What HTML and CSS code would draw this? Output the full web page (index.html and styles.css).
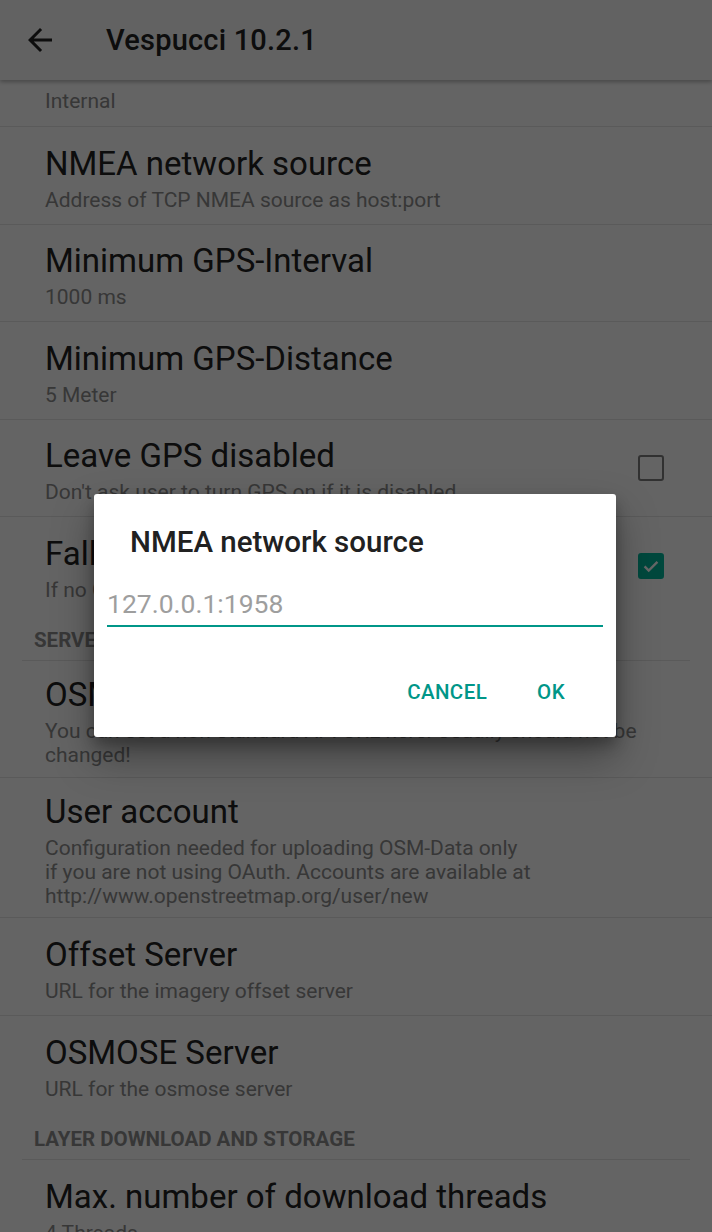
FILE: index.html
```html
<!DOCTYPE html>
<html lang="en">
<head>
<meta charset="utf-8">
<title>Vespucci 10.2.1</title>
<link rel="stylesheet" href="styles.css">
</head>
<body>
<div class="screen">
  <header class="toolbar">
    <button class="nav-btn" aria-label="Back">
      <svg viewBox="0 0 24 24" width="36" height="36"><path d="M20 11H7.83l5.59-5.59L12 4l-8 8 8 8 1.41-1.41L7.83 13H20v-2z" fill="#212121"/></svg>
    </button>
    <h1 class="toolbar-title">Vespucci 10.2.1</h1>
  </header>

  <main class="prefs">
    <div class="pref pref-partial">
      <div class="pref-text"><div class="pref-summary">Internal</div></div>
    </div>
    <div class="pref">
      <div class="pref-text">
        <div class="pref-title">NMEA network source</div>
        <div class="pref-summary">Address of TCP NMEA source as host:port</div>
      </div>
    </div>
    <div class="pref">
      <div class="pref-text">
        <div class="pref-title">Minimum GPS-Interval</div>
        <div class="pref-summary">1000 ms</div>
      </div>
    </div>
    <div class="pref">
      <div class="pref-text">
        <div class="pref-title">Minimum GPS-Distance</div>
        <div class="pref-summary">5 Meter</div>
      </div>
    </div>
    <div class="pref">
      <div class="pref-text">
        <div class="pref-title">Leave GPS disabled</div>
        <div class="pref-summary">Don't ask user to turn GPS on if it is disabled</div>
      </div>
      <span class="checkbox"></span>
    </div>
    <div class="pref last">
      <div class="pref-text">
        <div class="pref-title">Fallback to network location</div>
        <div class="pref-summary">If no GPS fix is available use network location</div>
      </div>
      <span class="checkbox checked">
        <svg viewBox="0 0 24 24" width="22" height="22"><path d="M5 12.5l4.5 4.5L19 7.5" fill="none" stroke="#ffffff" stroke-width="2.6"/></svg>
      </span>
    </div>

    <div class="category">Server settings</div>
    <div class="pref">
      <div class="pref-text">
        <div class="pref-title">OSM API URL</div>
        <div class="pref-summary">You can set a non-standard API URL here. Usually should not be<br>changed!</div>
      </div>
    </div>
    <div class="pref">
      <div class="pref-text">
        <div class="pref-title">User account</div>
        <div class="pref-summary">Configuration needed for uploading OSM-Data only<br>if you are not using OAuth. Accounts are available at<br>http://www.openstreetmap.org/user/new</div>
      </div>
    </div>
    <div class="pref">
      <div class="pref-text">
        <div class="pref-title">Offset Server</div>
        <div class="pref-summary">URL for the imagery offset server</div>
      </div>
    </div>
    <div class="pref last">
      <div class="pref-text">
        <div class="pref-title">OSMOSE Server</div>
        <div class="pref-summary">URL for the osmose server</div>
      </div>
    </div>

    <div class="category">Layer download and storage</div>
    <div class="pref">
      <div class="pref-text">
        <div class="pref-title">Max. number of download threads</div>
        <div class="pref-summary">4 Threads</div>
      </div>
    </div>
  </main>

  <div class="scrim"></div>

  <div class="dialog" role="dialog">
    <h2 class="dialog-title">NMEA network source</h2>
    <div class="dialog-field">
      <span class="dialog-hint">127.0.0.1:1958</span>
    </div>
    <div class="dialog-actions">
      <button class="dialog-btn">Cancel</button>
      <button class="dialog-btn">OK</button>
    </div>
  </div>
</div>
</body>
</html>
```

FILE: styles.css
```css
html, body {
  margin: 0;
  padding: 0;
}

body {
  width: 712px;
  height: 1232px;
  overflow: hidden;
  background: #fafafa;
  font-family: Roboto, "Noto Sans", sans-serif;
  color: #212121;
}

.screen {
  position: relative;
  width: 712px;
  height: 1232px;
  overflow: hidden;
  background: #fafafa;
}

/* ---------- toolbar ---------- */
.toolbar {
  position: relative;
  z-index: 2;
  height: 80px;
  display: flex;
  align-items: center;
  background: #f5f5f5;
  box-shadow: 0 2px 4px rgba(0, 0, 0, 0.28);
}

.nav-btn {
  border: 0;
  background: none;
  padding: 0;
  margin-left: 22px;
  width: 36px;
  height: 36px;
  display: flex;
}

.toolbar-title {
  margin: 0 0 0 48px;
  font-size: 29px;
  font-weight: 500;
  color: #212121;
  letter-spacing: 0.2px;
}

/* ---------- preference list ---------- */
.prefs {
  display: flex;
  flex-direction: column;
}

.pref {
  display: flex;
  align-items: center;
  min-height: 97.6px;
  box-sizing: border-box;
  padding: 15px 48px 9.5px 45px;
  border-bottom: 1px solid #e0e0e0;
}

.pref.last {
  border-bottom: 0;
}

.pref.pref-partial {
  min-height: 47px;
  padding: 0 48px 13px 45px;
  align-items: flex-end;
}

.pref-partial .pref-summary {
  margin-top: 0;
}

.pref-text {
  flex: 1;
}

.pref-title {
  font-size: 33px;
  line-height: 38px;
  color: #212121;
}

.pref-summary {
  margin-top: 5px;
  font-size: 21px;
  line-height: 24px;
  color: #8a8a8a;
}

.checkbox {
  flex: none;
  width: 22px;
  height: 22px;
  margin-top: -5px;
  border: 2.5px solid #7a7a7a;
  border-radius: 3px;
  display: flex;
  align-items: center;
  justify-content: center;
}

.checkbox.checked {
  border-color: #00b39a;
  background: #00b39a;
}

.category {
  height: 46.5px;
  box-sizing: border-box;
  margin: 0 22px;
  padding: 14px 0 0 12px;
  font-size: 20.5px;
  line-height: 22px;
  font-weight: 700;
  text-transform: uppercase;
  color: #8a8a8a;
  border-bottom: 1.5px solid #e0e0e0;
}

/* ---------- scrim & dialog ---------- */
.scrim {
  position: absolute;
  inset: 0;
  z-index: 5;
  background: rgba(0, 0, 0, 0.6);
}

.dialog {
  position: absolute;
  z-index: 6;
  left: 94px;
  top: 494px;
  width: 522px;
  height: 243px;
  box-sizing: border-box;
  background: #ffffff;
  border-radius: 3px;
  box-shadow: 0 20px 40px rgba(0, 0, 0, 0.35), 0 8px 14px rgba(0, 0, 0, 0.25);
  display: flex;
  flex-direction: column;
}

.dialog-title {
  margin: 0;
  padding: 32px 0 0 36px;
  font-size: 29.5px;
  line-height: 32px;
  font-weight: 500;
  color: #212121;
}

.dialog-field {
  margin: 31px 13px 0 13px;
  padding-bottom: 6px;
  border-bottom: 2.5px solid #009688;
  font-size: 26.5px;
  line-height: 30px;
}

.dialog-hint {
  color: #9e9e9e;
}

.dialog-actions {
  margin-top: auto;
  height: 90px;
  display: flex;
  justify-content: flex-end;
  align-items: center;
  padding: 0 26px 0 0;
  box-sizing: border-box;
}

.dialog-btn {
  border: 0;
  background: none;
  padding: 0 25px;
  font-family: Roboto, "Noto Sans", sans-serif;
  font-size: 20.5px;
  font-weight: 500;
  text-transform: uppercase;
  color: #009688;
  letter-spacing: 0.4px;
}
```
